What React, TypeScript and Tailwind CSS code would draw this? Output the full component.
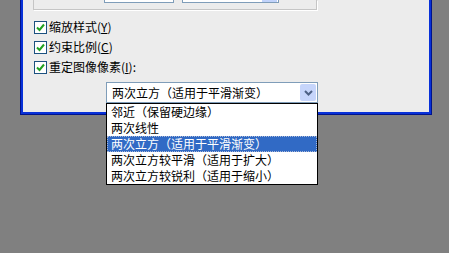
import React from 'react';

const font = { fontFamily: '"Noto Sans CJK SC", "Noto Sans", sans-serif' };

const options = [
  '邻近（保留硬边缘）',
  '两次线性',
  '两次立方（适用于平滑渐变）',
  '两次立方较平滑（适用于扩大）',
  '两次立方较锐利（适用于缩小）',
];

function Check({ label, hotkey, suffix = '' }: { label: string; hotkey: string; suffix?: string }) {
  return (
    <div className="flex h-[20px] items-center pl-[11px]">
      <div className="flex h-[13px] w-[13px] items-center justify-center border border-[#1c5180] bg-white">
        <svg width="9" height="9" viewBox="0 0 9 9">
          <path d="M1 4.5 L3.5 7 L8 1.5" fill="none" stroke="#21a121" strokeWidth="2" />
        </svg>
      </div>
      <span className="ml-[2px] text-[12px] leading-[16px] text-black">
        {label}(<span className="underline">{hotkey}</span>){suffix}
      </span>
    </div>
  );
}

export default function App() {
  return (
    <div className="h-[253px] w-[449px] overflow-hidden bg-[#808080]" style={font}>
      <div className="ml-[20px] w-[412px] border-x border-b border-[#00138c]">
        <div className="h-[114px] border-x-2 border-b-2 border-[#0831d9] bg-[#ececec]">
          {/* group panel cut at top */}
          <div className="ml-[10px] flex h-[10px] w-[284px] border-x border-b border-[#c5c5c5] shadow-[1px_1px_0_#ffffff]">
            <div className="ml-[70px] h-[3px] w-[70px] border-x border-b border-[#7f9db9] bg-white" />
            <div className="ml-[8px] flex h-[3px] w-[97px] justify-end border-x border-b border-[#7f9db9] bg-white">
              <div className="mr-[1px] h-[2px] w-[15px] bg-[#c1d3fb]" />
            </div>
          </div>

          <div className="mt-[7px] flex flex-col">
            <Check label="缩放样式" hotkey="Y" />
            <Check label="约束比例" hotkey="C" />
            <Check label="重定图像像素" hotkey="I" suffix=":" />
          </div>

          <div className="relative ml-[83px] mt-[5px] w-[212px]">
            <div className="flex h-[21px] items-stretch border border-[#7f9db9] bg-white p-[1px]">
              <span className="flex-1 pl-[4px] text-[12px] leading-[17px] text-black">
                两次立方（适用于平滑渐变）
              </span>
              <div className="flex w-[16px] items-center justify-center rounded-[2px] bg-[#c6d5fb]">
                <svg width="9" height="6" viewBox="0 0 9 6">
                  <path d="M1 1 L4.5 4.5 L8 1" fill="none" stroke="#4d6185" strokeWidth="2" />
                </svg>
              </div>
            </div>
            <ul className="absolute left-0 top-full z-10 w-full border border-black bg-white">
              {options.map((o, i) => (
                <li
                  key={o}
                  className={`h-[16px] text-[12px] whitespace-nowrap ${
                    i === 2
                      ? 'border border-dotted border-[#a9b8d8] bg-[#316ac5] pl-[3px] leading-[14px] text-white'
                      : 'pl-[4px] leading-[15px] text-black'
                  }`}
                >
                  {o}
                </li>
              ))}
            </ul>
          </div>
        </div>
      </div>
    </div>
  );
}
